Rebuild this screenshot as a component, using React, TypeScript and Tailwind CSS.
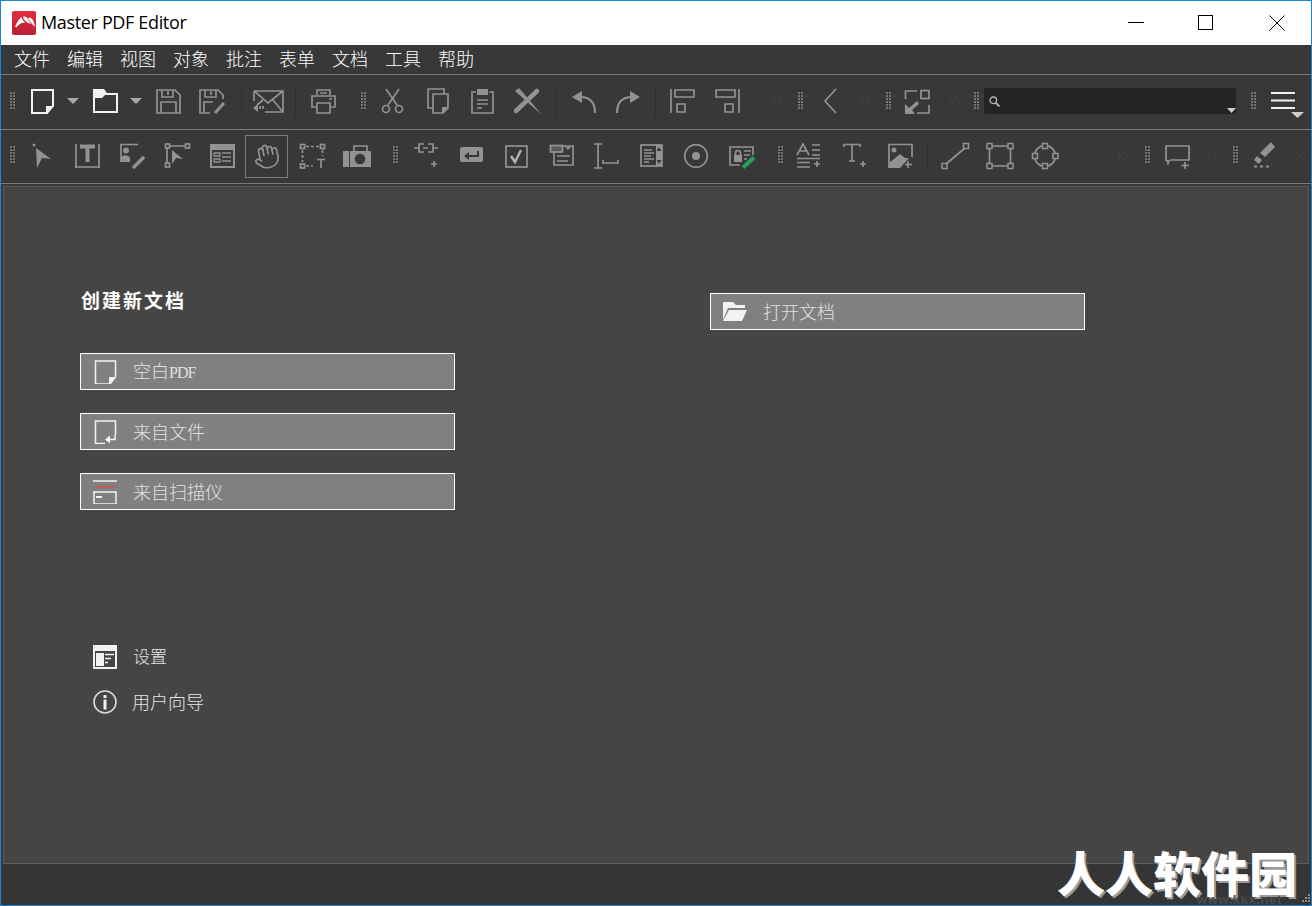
import type { ReactNode } from 'react';

const G = '#929292';
const cjk = '[font-family:"Noto_Sans_CJK_SC",sans-serif]';

// svg box 30px tall so icon coords can be read straight off the toolbar band
const Ic = ({ w, h = 30, className = '', children }: { w: number; h?: number; className?: string; children: ReactNode }) => (
  <svg width={w} height={h} viewBox={`0 0 ${w} ${h}`} fill="none" stroke={G} strokeWidth={1.7} className={`shrink-0 overflow-visible ${className}`}>
    {children}
  </svg>
);

const Grip = ({ className = '' }: { className?: string }) => (
  <svg width={6} height={30} viewBox="0 0 6 30" className={`shrink-0 ${className}`} fill="#767676">
    {[5, 8, 11, 14, 17, 20].map((y) => (
      <g key={y}>
        <rect x={0} y={y} width={2} height={2} />
        <rect x={3} y={y} width={2} height={2} />
      </g>
    ))}
  </svg>
);

const Sep = ({ className = '' }: { className?: string }) => <div className={`w-px h-[30px] shrink-0 bg-[#2f2f2f] ${className}`} />;

const More = ({ w = 14, className = '' }: { w?: number; className?: string }) => (
  <svg width={w} height={30} viewBox={`0 0 ${w} 30`} fill="none" stroke="#404040" strokeWidth={1.5} className={`shrink-0 ${className}`}>
    <path d="M1 10l4.500 5-4.500 5M7 10l4.500 5-4.500 5" />
  </svg>
);

const Arrow = ({ className = '' }: { className?: string }) => (
  <Ic w={12} className={className}>
    <polygon points="0,11 12,11 6,17" fill="#a8a8a8" stroke="none" />
  </Ic>
);

const Handle = ({ x, y }: { x: number; y: number }) => <rect x={x} y={y} width={5} height={5} strokeWidth={1.500} />;

const Toolbar1 = () => (
  <div className="h-[55px] flex items-start pt-3 border-b border-[#7a7a7a] shrink-0">
    <Grip className="ml-[9px]" />
    <Ic w={23} className="ml-[15px]">
      <path d="M1 3H22V19L16 26H1Z" stroke="#f2f2f2" strokeWidth={2} />
      <polygon points="15,26 15,19 22,19" fill="#f2f2f2" stroke="none" />
    </Ic>
    <Arrow className="ml-[13px]" />
    <Ic w={25} className="ml-[14px]">
      <polygon points="0,2 11,2 14,6 25,6 25,8 12,8 9,11 0,11" fill="#f2f2f2" stroke="none" />
      <path d="M1 6V25H24V6" stroke="#f2f2f2" strokeWidth={2} />
    </Ic>
    <Arrow className="ml-3" />
    <Ic w={25} className="ml-[14px]">
      <path d="M1 3H19L24 8V26H1Z M6 3V10H17V3 M12 4V8 M5 26V15H20V26" />
    </Ic>
    <Ic w={28} className="ml-[18px]">
      <path d="M11 26H1V3H19L24 8V12 M6 3V10H17V3 M12 4V8 M5 26V15H14" />
      <path d="M16 26L25 16" strokeWidth={3} />
    </Ic>
    <Sep className="ml-[14px]" />
    <Ic w={31} className="ml-[11px]">
      <path d="M1 4H30V25H12 M1 4V14 M1 4L15 16L30 4 M30 25L20 13 M10 13L4 18" />
      <polygon points="0,21 5,17 5,25" fill={G} stroke="none" />
      <path d="M7 19V22M10 19V22" />
    </Ic>
    <Sep className="ml-[11px]" />
    <Ic w={25} className="ml-[15px]">
      <path d="M6 8V3H19V8 M5 20H1V9H24V20H20 M6 16H19V26H6Z M9 6H16" />
      <path d="M18 12H21" />
    </Ic>
    <Grip className="ml-[25px]" />
    <Ic w={21} className="ml-[15px]">
      <path d="M4 2L15 18M17 2L6 18" />
      <circle cx={4} cy={22} r={3.500} />
      <circle cx={17} cy={22} r={3.500} />
    </Ic>
    <Ic w={22} className="ml-6">
      <path d="M6 21H1V2H17V7 M6 7H21V21L16 26H6Z" />
      <polygon points="15,26 15,20 21,20" fill={G} stroke="none" />
    </Ic>
    <Ic w={23} className="ml-[22px]">
      <path d="M5 5H1V26H22V5H18 M6 13H17 M6 17H17 M6 21H11" />
      <rect x={6} y={2} width={11} height={6} fill={G} stroke="none" />
    </Ic>
    <Ic w={29} className="ml-[19px]">
      <path d="M24 4L3 24" strokeWidth={4.500} strokeLinecap="round" />
      <polygon points="2,4 6,1 29,28" fill={G} stroke="none" />
    </Ic>
    <Sep className="ml-[13px]" />
    <Ic w={24} className="ml-4">
      <polygon points="0,10 10,4 10,16" fill={G} stroke="none" />
      <path d="M8 10C16 10 23 14 23 26" strokeWidth={2} />
    </Ic>
    <Ic w={24} className="ml-5">
      <polygon points="24,10 14,4 14,16" fill={G} stroke="none" />
      <path d="M16 10C8 10 1 14 1 26" strokeWidth={2} />
    </Ic>
    <Sep className="ml-[15px]" />
    <Ic w={25} className="ml-[14px]">
      <path d="M1 2V26M5 3H24V10H5Z M7 17H15V25H7Z" />
    </Ic>
    <Ic w={25} className="ml-5">
      <path d="M24 2V26M1 3H20V10H1Z M10 17H18V25H10Z" />
    </Ic>
    <More w={15} className="ml-[30px]" />
    <Grip className="ml-[13px]" />
    <Ic w={14} className="ml-[19px]">
      <path d="M13 2L2 14L13 26" />
    </Ic>
    <More w={15} className="ml-[21px]" />
    <Grip className="ml-[13px]" />
    <Ic w={26} className="ml-3">
      <path d="M13 4H1.500V12 M25 18V26H13" />
      <rect x={17} y={3.500} width={8} height={8} />
      <polygon points="1,27 1,17 5,21 13,14 15,17 8,23 11,27" fill={G} stroke="none" />
    </Ic>
    <More w={13} className="ml-[18px]" />
    <Grip className="ml-[13px]" />
    <div className="relative ml-1 mt-px w-[252px] h-[26px] shrink-0 bg-[#232323] rounded-[3px] flex items-center pl-[5px]">
      <svg width={11} height={11} viewBox="0 0 11 11" fill="none" stroke="#b5b5b5" strokeWidth={1.300}>
        <circle cx={4.300} cy={4.300} r={3.300} />
        <path d="M7 7L10.500 10.500" strokeWidth={1.800} />
      </svg>
      <svg width={9} height={5} viewBox="0 0 9 5" className="absolute right-0 bottom-[1px]">
        <polygon points="0,0 9,0 4.500,5" fill="#cfcfcf" />
      </svg>
    </div>
    <Grip className="ml-[15px]" />
    <Ic w={34} h={32} className="ml-[14px]">
      <path d="M0 6H24M0 13.500H24M0 21H24" stroke="#f0f0f0" strokeWidth={2} />
      <polygon points="20,25 33,25 26.500,31" fill="#cfcfcf" stroke="none" />
    </Ic>
  </div>
);

const Toolbar2 = () => (
  <div className="h-[54px] flex items-start pt-[11px] border-b border-[#7a7a7a] shrink-0">
    <Grip className="ml-[9px]" />
    <Ic w={20} className="ml-4">
      <circle cx={2} cy={4} r={1.500} fill={G} stroke="none" />
      <polygon points="4,7 19,18 10,17 5,27" fill={G} stroke="none" />
    </Ic>
    <Ic w={25} className="ml-[23px]">
      <path d="M1 3V27M24 3V27M0 26H25" />
      <path d="M5 5.500H20M12.500 5V21" strokeWidth={4} />
    </Ic>
    <Ic w={25} className="ml-5">
      <path d="M1 21V3.500H18" />
      <circle cx={6} cy={9.500} r={3} fill={G} stroke="none" />
      <polygon points="1,21 1,16 5,14 10,16 10,21" fill={G} stroke="none" />
      <path d="M13 27L24 16" strokeWidth={3.500} />
    </Ic>
    <Ic w={25} className="ml-5">
      <path d="M4 5H21M2 7V22" />
      <rect x={0.500} y={3} width={4} height={4} />
      <rect x={20.500} y={3} width={4} height={4} />
      <rect x={0.500} y={22} width={4} height={4} />
      <polygon points="7,9 18,18 11,17 7,23" fill={G} stroke="none" />
    </Ic>
    <Ic w={25} className="ml-5">
      <rect x={0} y={3} width={25} height={24} fill={G} stroke="none" />
      <rect x={2} y={9} width={21} height={16} fill="#383838" stroke="none" />
      <path d="M4 12H10V15H4Z M4 18H10V21H4Z M12 12H21M12 16H21M12 20H21" strokeWidth={1.300} />
    </Ic>
    <div className="ml-[10px] -mt-[6px] w-[43px] h-[43px] shrink-0 border border-[#7a7a7a] flex items-center justify-center">
      <svg width={27} height={27} viewBox="0 0 24 24" fill="none" stroke={G} strokeWidth={1.500} strokeLinecap="round" strokeLinejoin="round" className="-rotate-[12deg]">
        <path d="M18 11V6a2 2 0 0 0-4 0" />
        <path d="M14 10V4a2 2 0 0 0-4 0v2" />
        <path d="M10 10.500V6a2 2 0 0 0-4 0v8" />
        <path d="M18 8a2 2 0 1 1 4 0v6a8 8 0 0 1-8 8h-2c-2.800 0-4.500-.860-5.990-2.340l-3.600-3.600a2 2 0 0 1 2.830-2.820L7 15" />
      </svg>
    </div>
    <Ic w={26} className="ml-3">
      <rect x={0.500} y={3.500} width={4} height={4} />
      <rect x={20.500} y={3.500} width={4} height={4} />
      <rect x={0.500} y={23} width={4} height={4} />
      <path d="M6 5.500H19M2.500 9V21M6 25H13M22.500 9V15" strokeDasharray="3 2" />
      <path d="M17 18.500H25M21 18.500V27" />
    </Ic>
    <Ic w={28} className="ml-[17px]">
      <path d="M11 10V5H24V10" />
      <rect x={0} y={10} width={6} height={16} fill={G} stroke="none" />
      <rect x={7} y={10} width={21} height={16} fill={G} stroke="none" />
      <circle cx={17} cy={18} r={6} fill="#383838" stroke={G} strokeWidth={1.500} />
    </Ic>
    <Grip className="ml-[22px]" />
    <Ic w={25} className="ml-[15px]">
      <path d="M0 7H5M10 3H5V11H10M9 7H14M14 3H19V11H14M19 7H24 M20 20V26M17 23H23" />
    </Ic>
    <Ic w={24} className="ml-[21px]">
      <rect x={0} y={6} width={23} height={15} rx={2} fill={G} stroke="none" />
      <path d="M18 10V15H8" stroke="#383838" strokeWidth={2} />
      <polygon points="4,15 9,11 9,19" fill="#383838" stroke="none" />
    </Ic>
    <Ic w={23} className="ml-[21px]">
      <rect x={1} y={5} width={21} height={21} />
      <path d="M6 15L10 21L16 9" stroke="#b0b0b0" strokeWidth={2.500} />
    </Ic>
    <Ic w={24} className="ml-[22px]">
      <path d="M12 5H24M4 11V24H23V5" />
      <rect x={0.500} y={4.500} width={12} height={6.500} fill={G} fillOpacity={0.4} />
      <polygon points="15,6 21,6 18,9" fill={G} stroke="none" />
      <path d="M7 15H20M7 20H18" />
    </Ic>
    <Ic w={25} className="ml-5">
      <path d="M0 3H8M4 3V27M0 27H8M9 19V22H24V19" />
    </Ic>
    <Ic w={23} className="ml-[21px]">
      <rect x={1} y={4} width={21} height={21} />
      <path d="M4 9H12M4 12H14M4 15H11M4 18H14M4 21H9" />
      <rect x={16} y={4} width={6} height={21} fill={G} stroke="none" />
      <polygon points="19,6 16.500,10 21.500,10" fill="#383838" stroke="none" />
      <polygon points="19,23 16.500,19 21.500,19" fill="#383838" stroke="none" />
    </Ic>
    <Ic w={24} className="ml-[21px]">
      <circle cx={12} cy={15} r={11.300} />
      <circle cx={12} cy={15} r={4} fill={G} stroke="none" />
    </Ic>
    <Ic w={26} className="ml-[21px]">
      <path d="M11 24H1V6H24V14 M15 10H22M15 14H21M15 18H18" />
      <rect x={5} y={14} width={8} height={7} fill={G} stroke="none" />
      <path d="M6.500 14V12a2.500 2.500 0 0 1 5 0v2" />
      <path d="M14 26.500L25 16.500" stroke="#22a559" strokeWidth={4} />
    </Ic>
    <Grip className="ml-[23px]" />
    <Ic w={26} className="ml-3">
      <path d="M1 14L7 3L13 14M3 10H11M16 4H24M16 9H24M16 14H24M1 17.500H24M1 21.500H14M1 26H14M21 20V26M18 23H24" />
    </Ic>
    <Ic w={25} className="ml-[21px]">
      <path d="M1 6V3.500H17V6M9 3.500V20M6 20H12M20 20V26M17 23H23" />
    </Ic>
    <Ic w={25} className="ml-5">
      <path d="M1 27V3.500H24V16" />
      <circle cx={6} cy={9} r={2.500} fill={G} stroke="none" />
      <polygon points="1,27 1,22 12,13 17,17 21,17 12,27" fill={G} stroke="none" />
      <path d="M20 20V27M17 23.500H24" />
    </Ic>
    <Sep className="ml-[14px]" />
    <Ic w={29} className="ml-[13px]">
      <path d="M5 23L24 7" />
      <Handle x={1} y={22.500} />
      <Handle x={22.500} y={2.500} />
    </Ic>
    <Ic w={28} className="ml-4">
      <path d="M6 5H22M6 25H22M3.500 8V22M24.500 8V22" />
      <Handle x={1} y={2.500} />
      <Handle x={22} y={2.500} />
      <Handle x={1} y={22.500} />
      <Handle x={22} y={22.500} />
    </Ic>
    <Ic w={29} className="ml-[17px]">
      <circle cx={14} cy={15} r={10.500} />
      <g fill="#383838">
        <Handle x={11.500} y={2.500} />
        <Handle x={1.500} y={12.500} />
        <Handle x={22} y={12.500} />
        <Handle x={11.500} y={22.500} />
      </g>
    </Ic>
    <More w={13} className="ml-14" />
    <Grip className="ml-4" />
    <Ic w={26} className="ml-[14px]">
      <path d="M1 20V5H24V19H5" />
      <polygon points="1,19 5,19 3,25" fill={G} stroke="none" />
      <path d="M20 21V28M16.500 24.500H24" />
    </Ic>
    <More w={13} className="ml-[14px]" />
    <Grip className="ml-[15px]" />
    <Ic w={24} className="ml-[14px]">
      <polygon points="7,12 18,1 22,6 12,16" fill={G} stroke="none" />
      <polygon points="1,19 4,15 9,19 6,23" fill={G} stroke="none" />
      <path d="M1 25.500H4M7 25.500H10M13 25.500H16" strokeWidth={2} />
    </Ic>
    <More w={12} className="ml-[18px]" />
  </div>
);

const DocIcon = () => (
  <svg width={24} height={24} viewBox="0 0 24 24" fill="none" stroke="#f2f2f2" strokeWidth={1.500} className="shrink-0">
    <path d="M2.500 1H22.500V17L17 24H2.500Z" />
    <polygon points="16,24 16,17 23,17" fill="#f2f2f2" stroke="none" />
  </svg>
);

const FromFileIcon = () => (
  <svg width={24} height={24} viewBox="0 0 24 24" fill="none" stroke="#f2f2f2" strokeWidth={1.500} className="shrink-0">
    <path d="M12 23.500H2.500V1H22.500V15" />
    <path d="M22 15V19.500H15" />
    <polygon points="12,19.500 17,15.500 17,23.500" fill="#f2f2f2" stroke="none" />
  </svg>
);

const ScannerIcon = () => (
  <svg width={24} height={24} viewBox="0 0 24 24" fill="none" className="shrink-0">
    <path d="M0 1H24M1 12V24H23V12H0" stroke="#f2f2f2" strokeWidth={1.500} />
    <path d="M3 6.500H21" stroke="#e04848" strokeWidth={1.500} />
    <path d="M3 17H9" stroke="#f2f2f2" strokeWidth={2} />
  </svg>
);

const OpenIcon = () => (
  <svg width={24} height={24} viewBox="0 0 24 24" className="shrink-0">
    <polygon points="0,2 10,2 13,5 22,5 22,8 5,8 0,20" fill="#f2f2f2" />
    <polygon points="6,10 24,10 19,21 0,21" fill="#f2f2f2" />
  </svg>
);

const BigButton = ({ icon, label }: { icon: ReactNode; label: ReactNode }) => (
  <div className="w-[375px] h-[37px] border border-white bg-[#808080] flex items-center pl-3 gap-4">
    {icon}
    <span className="text-[18px] leading-[27px] font-light text-[#e0e0e0]">{label}</span>
  </div>
);

export default function App() {
  return (
    <div className={`w-[1312px] h-[906px] flex flex-col overflow-hidden relative border border-[#1a84d8] bg-[#383838] ${cjk}`}>
      {/* title bar */}
      <div className="h-[44px] bg-white flex items-center shrink-0">
        <svg width={24} height={24} viewBox="0 0 24 24" className="ml-[11px] shrink-0">
          <defs>
            <linearGradient id="logo" x1="0" y1="0" x2="0" y2="1">
              <stop offset="0" stopColor="#e3303f" />
              <stop offset="1" stopColor="#b81d34" />
            </linearGradient>
          </defs>
          <rect width={24} height={24} rx={2} fill="url(#logo)" />
          <path d="M3 16C5 11 7 8 9 6L13 12C10 11 7 13 5 16Z M11 6C13 5 15 6 16 8L19 13C16 12 13 11 11 6Z M16 7C19 5 22 9 23 16L20 13Z" fill="#fff" />
        </svg>
        <span className='ml-[5px] -mt-[2px] text-[18px] text-black [font-family:"Open_Sans",sans-serif] tracking-[-0.35px]'>Master PDF Editor</span>
        <div className="ml-auto flex items-center">
          <svg width={16} height={16} viewBox="0 0 16 16" stroke="#000" fill="none" className="mr-[54px]">
            <path d="M0 7.500H16" />
          </svg>
          <svg width={16} height={16} viewBox="0 0 16 16" stroke="#000" fill="none" className="mr-[55px]">
            <rect x={0.500} y={0.500} width={14} height={14} />
          </svg>
          <svg width={16} height={16} viewBox="0 0 16 16" stroke="#000" fill="none" className="mr-[26px]">
            <path d="M0.500 0.500L15.500 15.500M15.500 0.500L0.500 15.500" />
          </svg>
        </div>
      </div>

      {/* menu */}
      <div className="h-[30px] flex items-center pl-[13px] pb-[3px] gap-[17px] border-b border-[#7a7a7a] text-[18px] leading-none text-white font-light shrink-0">
        {['文件', '编辑', '视图', '对象', '批注', '表单', '文档', '工具', '帮助'].map((m) => (
          <span key={m}>{m}</span>
        ))}
      </div>

      <Toolbar1 />
      <Toolbar2 />

      {/* start page */}
      <div className="mx-[2px] mt-[2px] h-[678px] shrink-0 border border-[#5c5c5c] bg-[#454545] flex pl-[76px]">
        <div className="w-[375px] pt-[99px]">
          <h2 className="pl-px h-[28px] leading-[28px] text-[19px] font-bold tracking-[2px] text-white">创建新文档</h2>
          <div className="mt-[39px] flex flex-col gap-[23px]">
            <BigButton icon={<DocIcon />} label={<>空白<span className='text-[16px] tracking-[-1px] [font-family:"Liberation_Serif",serif]'>PDF</span></>} />
            <BigButton icon={<FromFileIcon />} label="来自文件" />
            <BigButton icon={<ScannerIcon />} label="来自扫描仪" />
          </div>
          <div className="mt-[135px] pl-[13px] flex items-center gap-4 h-6 text-[17px] font-light text-[#e6e6e6]">
            <svg width={24} height={24} viewBox="0 0 24 24" className="shrink-0">
              <rect width={24} height={24} fill="#f2f2f2" />
              <rect x={2} y={6} width={20} height={16} fill="#454545" />
              <rect x={3} y={8} width={8} height={13} fill="#f2f2f2" />
              <path d="M12 9.500H21M12 13.500H18M12 17.500H15" stroke="#f2f2f2" strokeWidth={1.500} />
            </svg>
            <span className="pb-[2px]">设置</span>
          </div>
          <div className="mt-[21px] pl-[13px] flex items-center gap-4 h-6 text-[18px] font-light text-[#e6e6e6]">
            <svg width={24} height={24} viewBox="0 0 24 24" fill="none" className="shrink-0">
              <circle cx={12} cy={12} r={11} stroke="#dcdcdc" strokeWidth={1.600} />
              <rect x={10.500} y={9.500} width={3} height={10} fill="#f2f2f2" />
              <rect x={10.500} y={5} width={3} height={3} fill="#f2f2f2" />
            </svg>
            <span className="pb-[2px] -ml-px">用户向导</span>
          </div>
        </div>
        <div className="ml-[255px] pt-[106px]">
          <BigButton icon={<OpenIcon />} label="打开文档" />
        </div>
      </div>

      {/* status bar */}
      <div className="flex-1 bg-[#353535]" />

      {/* watermark */}
      <div className="absolute left-[1056px] top-[847px] text-[48px] leading-[46px] font-black text-white [text-shadow:2px_2px_0_#9a9a9a] whitespace-nowrap">
        人人软件园
      </div>
      <div className='absolute left-[1196px] top-[894px] text-[13px] font-bold tracking-[0.6px] text-[#4b4b4b] [font-family:"Liberation_Sans",sans-serif] leading-[10px]'>www.kkx.net</div>
      <svg width={10} height={10} viewBox="0 0 10 10" fill="#8a8a8a" className="absolute right-px bottom-px">
        <rect x={8} y={0} width={2} height={2} />
        <rect x={5} y={3} width={2} height={2} />
        <rect x={8} y={3} width={2} height={2} />
        <rect x={2} y={6} width={2} height={2} />
        <rect x={5} y={6} width={2} height={2} />
        <rect x={8} y={6} width={2} height={2} />
      </svg>
    </div>
  );
}
